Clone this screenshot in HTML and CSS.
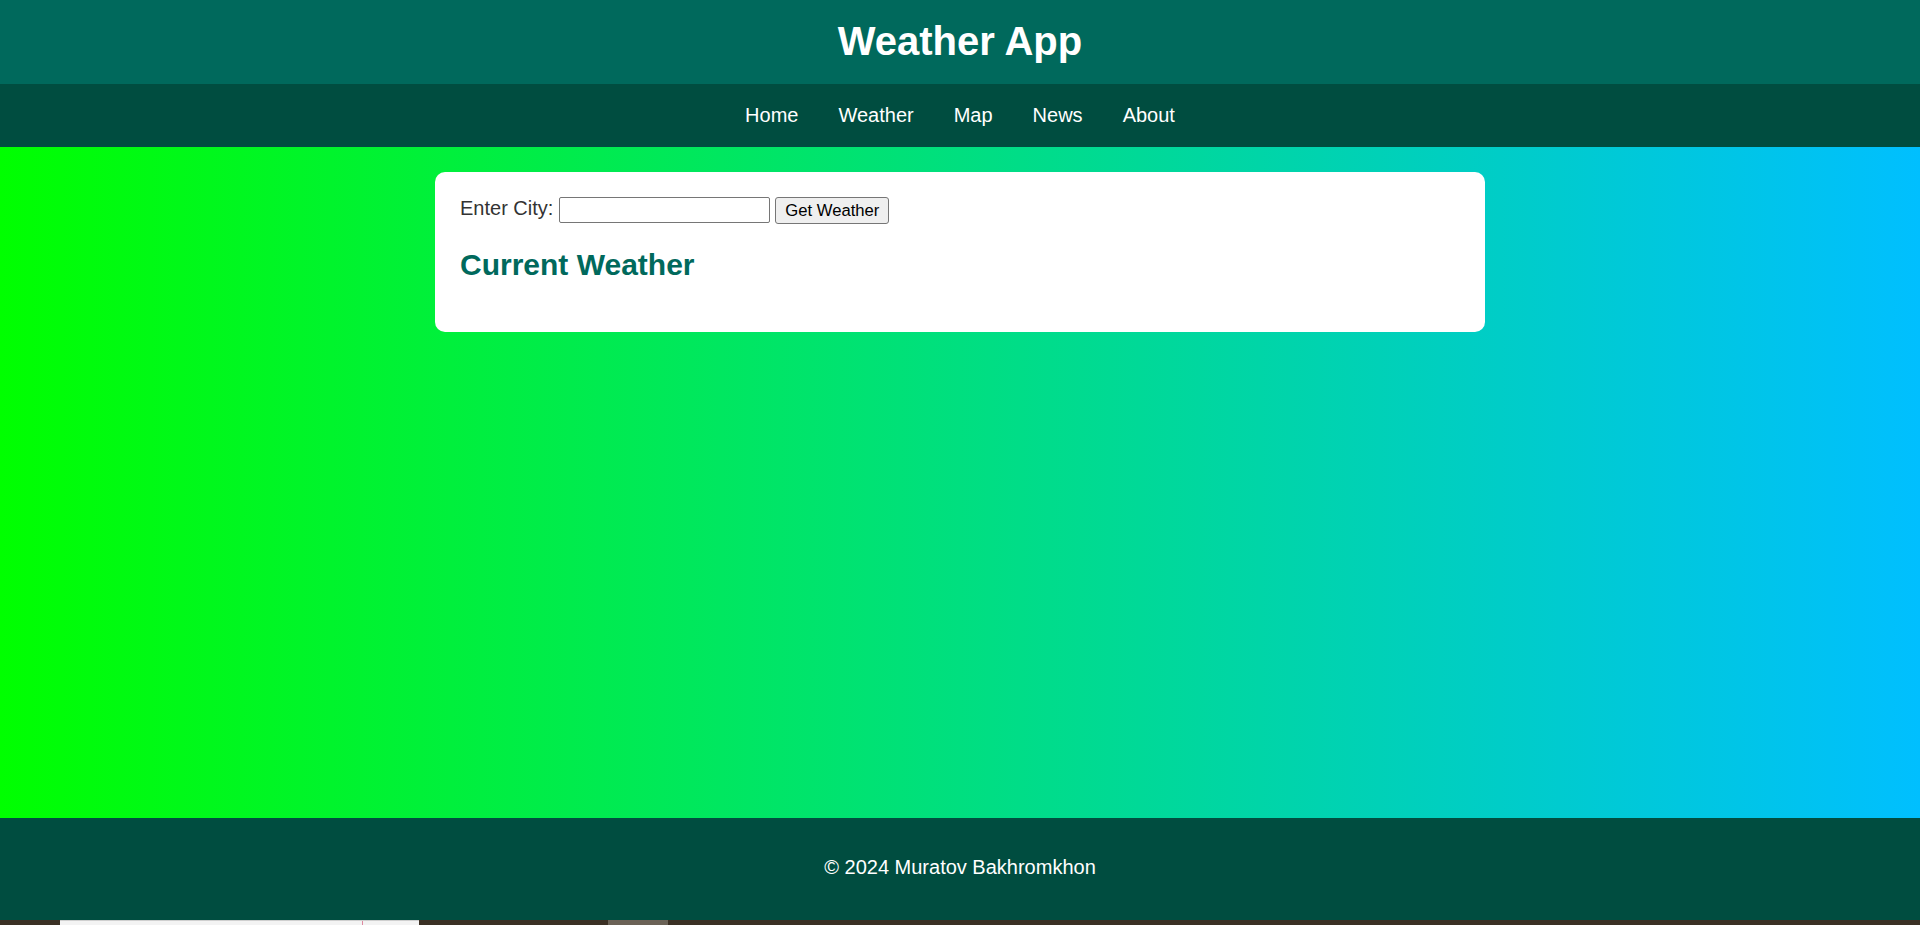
FILE: index.html
```html
<!DOCTYPE html>
<html lang="en">
<head>
<meta charset="utf-8">
<title>Weather App</title>
<link rel="stylesheet" href="styles.css">
</head>
<body>
<header class="site-header">
  <h1 class="site-title">Weather App</h1>
</header>
<nav class="site-nav">
  <ul class="nav-list">
    <li><a class="nav-link" href="#">Home</a></li>
    <li><a class="nav-link" href="#">Weather</a></li>
    <li><a class="nav-link" href="#">Map</a></li>
    <li><a class="nav-link" href="#">News</a></li>
    <li><a class="nav-link" href="#">About</a></li>
  </ul>
</nav>
<main class="main">
  <section class="card">
    <form class="city-form">
      <label class="city-label" for="city">Enter City:</label>
      <input class="city-input" id="city" type="text">
      <button class="city-button" type="button">Get Weather</button>
    </form>
    <h2 class="card-title">Current Weather</h2>
  </section>
</main>
<footer class="site-footer">
  <p class="footer-text">&copy; 2024 Muratov Bakhromkhon</p>
</footer>
<div class="taskbar">
  <span class="tb-gap-a"></span>
  <span class="tb-field"><span class="tb-field-main"></span><span class="tb-field-end"></span></span>
  <span class="tb-gap-b"></span>
  <span class="tb-app"></span>
</div>
</body>
</html>
```
FILE: styles.css
```css
html, body {
  margin: 0;
  padding: 0;
}
body {
  font-family: "Liberation Sans", Arial, sans-serif;
  font-size: 20px;
  color: #333;
  background: #004d40;
}
.site-header {
  background: #00695c;
  color: #fff;
  text-align: center;
  padding: 18px 0 20px;
}
.site-title {
  margin: 0;
  font-size: 40px;
  line-height: 46px;
  font-weight: bold;
}
.site-nav {
  background: #004d40;
  padding: 20px 0;
}
.nav-list {
  list-style: none;
  margin: 0;
  padding: 0;
  display: flex;
  justify-content: center;
  gap: 40px;
}
.nav-link {
  color: #fff;
  text-decoration: none;
  font-size: 20px;
  line-height: 23px;
  display: block;
}
.main {
  height: 671px;
  box-sizing: border-box;
  padding-top: 25px;
  background: linear-gradient(to right, #00ff00, #00bfff);
}
.card {
  width: 1050px;
  box-sizing: border-box;
  margin: 0 auto;
  background: #fff;
  border-radius: 10px;
  padding: 25px;
}
.city-form {
  display: flex;
  align-items: flex-start;
  gap: 5.5px;
  margin: 0;
  height: 26px;
}
.city-label {
  font-size: 20px;
  line-height: 23px;
  color: #333;
}
.city-input {
  width: 211px;
  height: 26px;
  box-sizing: border-box;
  border: 1px solid #767676;
  border-radius: 2px;
  padding: 1px 3px;
  margin: 0;
  font: 16.67px "Liberation Sans", Arial, sans-serif;
  background: #fff;
}
.city-button {
  width: 114px;
  height: 27px;
  box-sizing: border-box;
  border: 1px solid #767676;
  border-radius: 3px;
  background: #efefef;
  color: #000;
  padding: 0 7px;
  margin: 0;
  font: 16.67px "Liberation Sans", Arial, sans-serif;
}
.card-title {
  margin: 25px 0;
  font-size: 30px;
  line-height: 34px;
  color: #00695c;
  font-weight: bold;
}
.site-footer {
  background: #004d40;
  color: #fff;
  text-align: center;
  padding: 38px 0 41px;
}
.footer-text {
  margin: 0;
  font-size: 20px;
  line-height: 23px;
}
.taskbar {
  height: 5px;
  display: flex;
  background: #3b3024;
}
.tb-gap-a {
  width: 60px;
}
.tb-field {
  width: 359px;
  display: flex;
  border-top: 1px solid #cfcfcf;
  box-sizing: border-box;
}
.tb-field-main {
  width: 302px;
  background: #f3f3f3;
  border-right: 1px solid #e08aa0;
}
.tb-field-end {
  flex: 1;
  background: #f3f3f3;
}
.tb-gap-b {
  width: 189px;
}
.tb-app {
  width: 60px;
  background: #6b6256;
}
```
